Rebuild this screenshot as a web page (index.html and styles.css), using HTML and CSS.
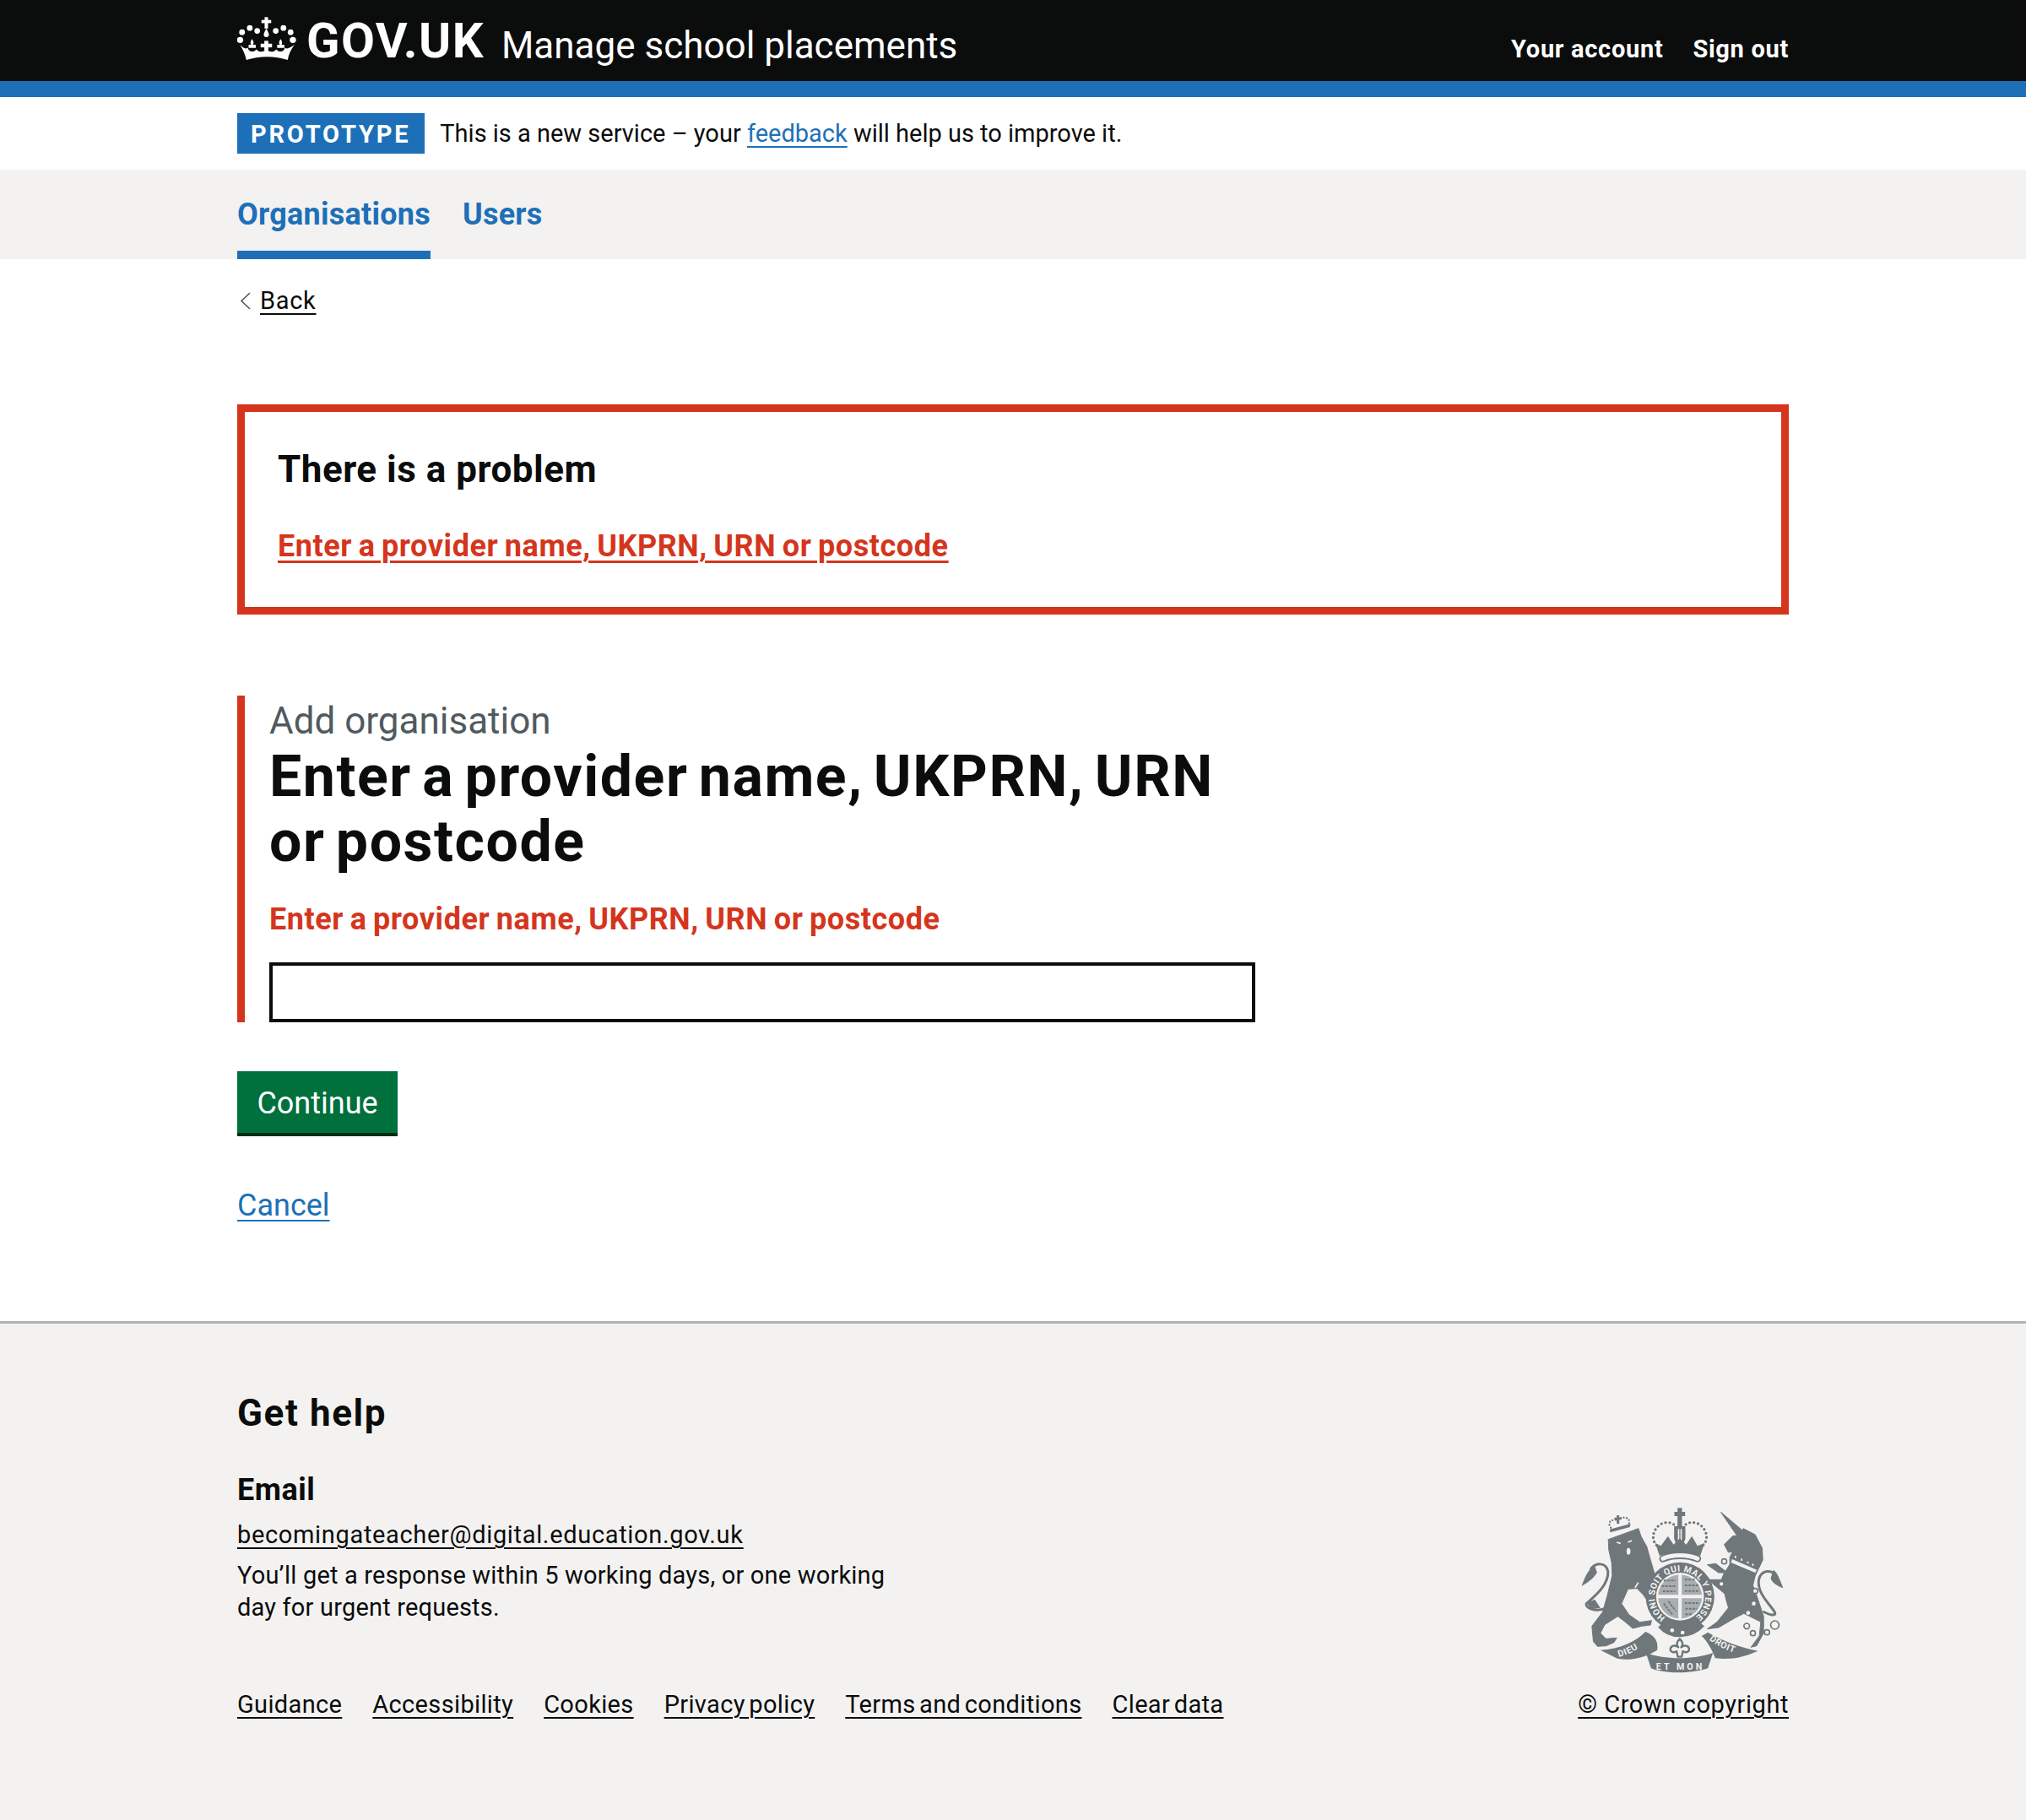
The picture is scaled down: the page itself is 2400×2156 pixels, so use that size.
FILE: index.html
```html
<!DOCTYPE html>
<html lang="en">
<head>
    <meta charset="UTF-8">
    <meta name="viewport" content="width=device-width, initial-scale=1.0">
    <title>Manage school placements</title>
    <link rel="stylesheet" href="styles.css">
</head>
<body>
    <header class="site-header">
        <div class="container header-row">
            <a class="logo" href="#">
                <svg class="crown" viewBox="18 15 207 152" aria-hidden="true">
                    <path d="M28 112C40 125 48 128 55 122 58 138 75 140 85 128 95 140 110 138 120 128 130 138 145 140 155 128 165 140 182 138 185 122 192 128 200 125 218 112 206 130 198 145 195 165 150 150 95 150 50 165 46 145 38 130 28 112Z"/>
                    <rect x="113" y="98" width="14" height="34"/><rect x="100" y="108" width="40" height="13"/>
                    <path d="M70 92c6 8 7 14 3 20h10v11H58v-11h9c-4-6-3-12 3-20zM170 92c6 8 7 14 3 20h10v11h-25v-11h9c-4-6-3-12 3-20z"/>
                    <rect x="114" y="15" width="12" height="40"/><rect x="103" y="25" width="34" height="11"/>
                    <path d="M120 55c7 12 9 18 9 21a9 9 0 0 1-18 0c0-3 2-9 9-21z"/>
                    <circle cx="35" cy="68" r="10"/><circle cx="62" cy="53" r="10"/><circle cx="88" cy="63" r="10"/><circle cx="153" cy="63" r="10"/><circle cx="180" cy="53" r="10"/><circle cx="205" cy="68" r="10"/><circle cx="28" cy="95" r="11"/><circle cx="213" cy="95" r="11"/>
                </svg>
                <span class="logo-text">GOV.UK</span>
            </a>
            <span class="service-name">Manage school placements</span>
            <nav class="account-nav">
                <a href="#">Your account</a>
                <a href="#">Sign out</a>
            </nav>
        </div>
    </header>

    <div class="container phase-banner">
        <strong class="tag">PROTOTYPE</strong>
        <span>This is a new service – your <a class="link" href="#">feedback</a> will help us to improve it.</span>
    </div>

    <nav class="primary-nav">
        <div class="container primary-row">
            <a class="current" href="#">Organisations</a>
            <a href="#">Users</a>
        </div>
    </nav>

    <main class="container main">
        <a class="back-link" href="#">
            <svg class="chevron" viewBox="0 0 14 21" aria-hidden="true"><path d="M13 1 3 10.5 13 20"/></svg>
            <span class="back-text">Back</span>
        </a>

        <section class="error-summary">
            <h2>There is a problem</h2>
            <a href="#">Enter a provider name, UKPRN, URN or postcode</a>
        </section>

        <form>
            <div class="form-group">
                <span class="caption">Add organisation</span>
                <h1>Enter a provider name, UKPRN, URN or&nbsp;postcode</h1>
                <p class="error-message">Enter a provider name, UKPRN, URN or postcode</p>
                <input class="text-input" type="text">
            </div>
            <button class="button" type="button">Continue</button>
        </form>
        <a class="link cancel" href="#">Cancel</a>
    </main>

    <footer class="site-footer">
        <div class="container footer-row">
            <div class="footer-main">
                <h2>Get help</h2>
                <h3>Email</h3>
                <a class="email" href="#">becomingateacher@digital.education.gov.uk</a>
                <p>You’ll get a response within 5 working days, or one working day for urgent requests.</p>
                <ul class="footer-links">
                    <li><a href="#">Guidance</a></li>
                    <li><a href="#">Accessibility</a></li>
                    <li><a href="#">Cookies</a></li>
                    <li><a href="#">Privacy policy</a></li>
                    <li><a href="#">Terms and conditions</a></li>
                    <li><a href="#">Clear data</a></li>
                </ul>
            </div>
            <div class="footer-crest">
                <svg class="crest" viewBox="90 60 740 600" aria-hidden="true">
                    <!-- lion -->
                    <path class="soft" d="M198 182 305 143 315 172 335 208 346 248 365 312 348 325 365 400 368 415 345 412 322 378 300 356 268 358 245 410 272 450 310 476 352 470 348 486 318 490 285 498 258 475 232 455 185 485 170 515 190 535 228 532 218 548 190 560 160 562 145 545 140 490 178 440 195 380 212 310 210 265 200 220Z"/>
                    <path class="crest-line" d="M185 428C150 440 115 425 120 410 135 395 200 350 197 295 190 262 150 262 135 290"/>
                    <path d="M150 275C125 285 112 325 103 348 125 335 145 322 158 300Z"/>
                    <path d="M122 408 150 395 170 425 135 430Z"/>
                    <path class="crest-gap" d="M228 192l14 4M282 186l-14 6M305 335l-12 18"/>
                    <ellipse class="crest-light" cx="270" cy="224" rx="7" ry="12"/>
                    <path d="M205 157 275 138 277 126 203 146Z"/>
                    <path class="crest-pearls small" d="M207 140C195 122 205 112 225 112M272 124C276 108 262 100 240 106"/>
                    <path d="M228 96h9v8h8v8h-8v14h-9v-14h-8v-8h8z"/>
                    <!-- unicorn -->
                    <path class="soft" d="M598 85 675 150 678 143 720 165 745 213 747 255 730 290 720 312 712 345 725 380 750 455 750 515 725 560 705 565 735 525 740 475 680 445 650 460 590 495 550 500 585 475 625 425 615 390 612 375 570 340 555 325 600 325 610 300 590 300 550 272 580 268 615 295 630 270 630 245 640 225 625 228 610 200 640 170 655 168Z"/>
                    <path class="crest-line" d="M748 438C770 450 800 458 788 438 770 410 725 370 733 325 740 290 780 285 795 315"/>
                    <path d="M785 290C800 300 810 330 820 355 795 345 780 335 775 320Z"/>
                    <path class="crest-light" d="M638 252 726 290 720 300 634 264Z"/>
                    <path class="crest-gap" d="M650 240v8M672 250v8M694 260v8M712 268v8"/>
                    <circle class="crest-light" cx="695" cy="443" r="7"/><circle class="crest-light" cx="715" cy="410" r="7"/><circle class="crest-ring filled" cx="720" cy="365" r="9"/>
                    <circle class="crest-ring" cx="610" cy="260" r="9"/><circle class="crest-ring filled" cx="600" cy="340" r="9"/>
                    <circle class="crest-ring" cx="690" cy="490" r="10"/><circle class="crest-ring" cx="712" cy="515" r="9"/><circle class="crest-ring" cx="762" cy="512" r="9"/><circle class="crest-ring" cx="790" cy="486" r="15"/>
                    <!-- garter and shield -->
                    <circle cx="453" cy="385" r="122"/>
                    <path class="crest-strap" d="M385 485C420 528 490 525 530 482"/>
                    <circle class="crest-light" cx="425" cy="505" r="7"/><circle class="crest-light" cx="462" cy="513" r="7"/>
                    <path id="garter" d="M401 459A90 90 0 1 1 505 459" fill="none"/>
                    <text class="crest-text garter-text"><textPath href="#garter" textLength="450">HONI SOIT QUI MAL Y PENSE</textPath></text>
                    <circle class="crest-light" cx="453" cy="385" r="85"/>
                    <path class="quarter" d="M447 379H375.2A78 78 0 0 1 447 307.2ZM459 379H530.8A78 78 0 0 0 459 307.2ZM447 391H375.2A78 78 0 0 0 447 462.8ZM459 391H530.8A78 78 0 0 1 459 462.8Z"/>
                    <path class="crest-stripe" d="M395 328h42M388 348h48M392 366h44M470 325h36M470 345h52M470 365h50M470 408h52M472 428h42M472 448h26M395 410l32 40M412 402l26 34"/>
                    <!-- crown -->
                    <path class="crest-pearls" d="M440 140C430 118 395 115 375 135 350 160 355 190 372 205M464 140C474 118 510 115 530 135 555 160 550 190 533 205"/>
                    <path d="M444 70h16v14h11v15h-11v36h12v45l-8 20h-24l-8-20v-45h12V99h-11V84h11z"/>
                    <path class="crest-gap" d="M448 145v40M457 145v40"/>
                    <path d="M365 195 385 205 410 170 430 200 452 178 475 200 495 170 515 205 540 195 525 240C480 225 425 225 380 240Z"/>
                    <path class="crest-band" d="M392 250C425 235 480 235 515 250"/>
                    <path class="crest-band-inner" d="M392 250C425 235 480 235 515 250"/>
                    <!-- motto -->
                    <path d="M170 575C240 572 295 545 330 510 360 520 378 545 372 575L345 590C300 608 265 612 230 605Z"/>
                    <path d="M332 585C400 610 500 610 570 585L552 640C490 660 400 660 350 640Z"/>
                    <path d="M530 525 552 512C600 540 660 565 730 578 680 600 640 610 578 604 565 570 550 545 530 525Z"/>
                    <path id="rib-l" d="M236 600C270 592 305 572 335 548" fill="none"/>
                    <path id="rib-r" d="M556 538C590 565 635 583 682 597" fill="none"/>
                    <text class="crest-text motto"><textPath href="#rib-l">DIEU</textPath></text>
                    <text class="crest-text motto" x="368" y="645" textLength="165">ET MON</text>
                    <text class="crest-text motto"><textPath href="#rib-r">DROIT</textPath></text>
                    <path class="crest-line thin" d="M452 535c-12 12-12 22-5 30-8-8-24-8-28 4-3 12 12 18 22 10l4 20h14l4-20c10 8 25 2 22-10-4-12-20-12-28-4 7-8 7-18-5-30z"/>
                </svg>
                <a href="#">© Crown copyright</a>
            </div>
        </div>
    </footer>
</body>
</html>
```

FILE: styles.css
```css
* { box-sizing: border-box; }
body { margin: 0; font-family: Roboto, Arial, sans-serif; font-size: 29px; line-height: 38px; color: #0b0c0c; background: #fff; }
a { color: inherit; }
.container { width: 1838px; margin: 0 auto; }

/* header */
.site-header { height: 115px; background: #0b0c0c; border-bottom: 19px solid #1d70b8; color: #fff; }
.header-row { display: flex; align-items: flex-start; height: 96px; }
.logo { display: flex; align-items: flex-start; gap: 12px; color: #fff; text-decoration: none; }
.crown { width: 70px; height: 52px; margin-top: 20px; fill: #fff; }
.logo-text { font-size: 58px; line-height: 68px; font-weight: 700; letter-spacing: 1.4px; margin-top: 14px; }
.service-name { font-size: 44px; line-height: 56px; margin: 26px 0 0 20px; }
.account-nav { display: flex; gap: 35px; margin-left: auto; padding-top: 38px; font-weight: 700; font-size: 29px; line-height: 40px; letter-spacing: 0.7px; }
.account-nav a { text-decoration: none; color: #fff; }

/* phase banner */
.phase-banner { display: flex; align-items: center; gap: 18px; height: 86px; font-size: 29px; }
.tag { display: block; background: #1d70b8; color: #fff; padding: 0 17px 0 16px; height: 48px; line-height: 50px; font-size: 29px; letter-spacing: 2.8px; }
.link { color: #1d70b8; text-underline-offset: 5px; text-decoration-thickness: 2px; }

/* primary nav */
.primary-nav { background: #f3f2f1; height: 106px; }
.primary-row { display: flex; gap: 38px; height: 106px; }
.primary-row a { display: block; padding-top: 32px; height: 106px; color: #1d70b8; text-decoration: none; font-weight: 700; font-size: 36px; line-height: 42px; letter-spacing: 0.25px; }
.primary-row .current { border-bottom: 10px solid #1d70b8; }

/* main */
.main { padding-top: 29px; height: 1258px; }
.back-link { display: flex; align-items: center; gap: 11px; height: 40px; margin-left: 2px; text-decoration: none; }
.chevron { width: 14px; height: 21px; fill: none; stroke: #505a5f; stroke-width: 1.6; }
.back-text { letter-spacing: 0.7px; text-decoration: underline; text-underline-offset: 5px; text-decoration-thickness: 2px; }

.error-summary { margin-top: 103px; height: 249px; border: 9px solid #d4351c; padding: 39px 39px 0; }
.error-summary h2 { margin: 0; font-size: 44px; line-height: 58px; font-weight: 700; letter-spacing: 0.5px; }
.error-summary a { display: block; margin-top: 41px; color: #d4351c; font-size: 36px; line-height: 42px; font-weight: 700; letter-spacing: 0.58px; word-spacing: -2px; text-underline-offset: 5px; text-decoration-thickness: 3px; }

.form-group { margin-top: 96px; height: 387px; border-left: 9px solid #d4351c; padding-left: 29px; }
.caption { display: block; color: #505a5f; font-size: 44px; line-height: 56px; padding-top: 2px; }
h1 { margin: 0; width: 1150px; font-size: 68px; line-height: 77px; font-weight: 700; letter-spacing: 1.55px; word-spacing: -6px; }
.error-message { margin: 28px 0 0; color: #d4351c; font-size: 36px; line-height: 50px; font-weight: 700; letter-spacing: 0.58px; word-spacing: -2px; }
.text-input { display: block; margin: 26px 0 0; width: 1168px; height: 71px; border: 4px solid #0b0c0c; background: #fff; border-radius: 0; }
.button { display: block; margin-top: 58px; width: 190px; height: 77px; background: #00703c; border: 0; border-bottom: 4px solid #002d18; border-radius: 0; color: #fff; font-family: inherit; font-size: 36px; padding: 2px 0 0; }
.cancel { display: inline-block; margin-top: 57px; font-size: 36px; line-height: 50px; }

/* footer */
.site-footer { height: 591px; background: #f3f2f1; border-top: 3px solid #b1b4b6; }
.footer-row { display: flex; justify-content: space-between; }
.footer-main { width: 1300px; }
.footer-main h2 { margin: 77px 0 0; font-size: 44px; line-height: 58px; font-weight: 700; letter-spacing: 1.6px; }
.footer-main h3 { margin: 40px 0 0; font-size: 36px; line-height: 44px; font-weight: 700; letter-spacing: 0.5px; }
.email { display: block; margin-top: 12px; letter-spacing: 0.66px; text-underline-offset: 5px; text-decoration-thickness: 2px; }
.footer-main p { margin: 10px 0 0; width: 790px; letter-spacing: 0.19px; }
.footer-links { display: flex; gap: 36px; list-style: none; margin: 77px 0 0; padding: 0; letter-spacing: 0.35px; word-spacing: -3px; }
.footer-links a, .footer-crest a { text-underline-offset: 5px; text-decoration-thickness: 2px; }
.footer-crest { display: flex; flex-direction: column; align-items: flex-end; padding-top: 215px; letter-spacing: 0.57px; }

/* crest */
.crest { display: block; width: 247px; height: 200px; margin: 0 3px 17px 0; fill: #6f777b; }
.soft { stroke: #6f777b; stroke-width: 3; stroke-linejoin: round; }
.crest-line { fill: none; stroke: #6f777b; stroke-width: 9; stroke-linejoin: round; }
.crest-line.thin { stroke-width: 7; }
.crest-gap { fill: none; stroke: #f3f2f1; stroke-width: 5; }
.crest-light { fill: #f3f2f1; }
.crest-ring { fill: none; stroke: #6f777b; stroke-width: 5; }
.crest-ring.filled { fill: #f3f2f1; }
.crest-pearls { fill: none; stroke: #6f777b; stroke-width: 10; stroke-linecap: round; stroke-dasharray: 0 15; }
.crest-pearls.small { stroke-width: 7; stroke-dasharray: 0 11; }
.crest-stripe { fill: none; stroke: #6f777b; stroke-width: 6; stroke-dasharray: 9 4; }
.crest-strap { fill: none; stroke: #6f777b; stroke-width: 26; }
.crest-band { fill: none; stroke: #6f777b; stroke-width: 26; stroke-linecap: round; }
.crest-band-inner { fill: none; stroke: #f3f2f1; stroke-width: 15; stroke-linecap: round; }
.quarter { fill: #a9aeb1; }
.crest-text { fill: #f3f2f1; font-family: Roboto, Arial, sans-serif; font-weight: 700; }
.garter-text { font-size: 31px; }
.motto { font-size: 32px; letter-spacing: 2px; }
```
